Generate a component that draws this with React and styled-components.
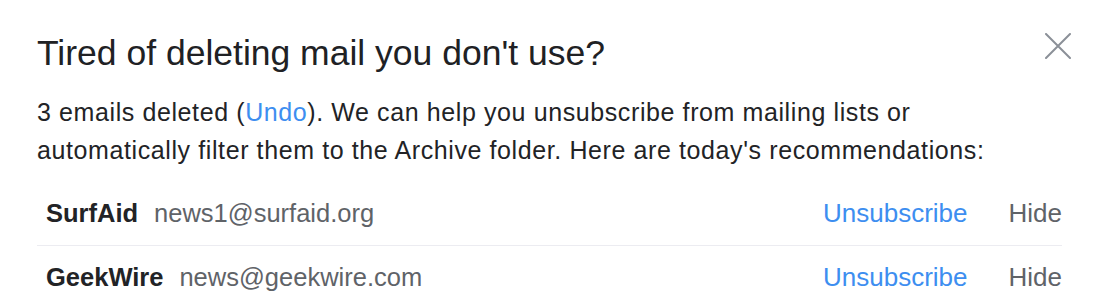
import React from "react";
import styled, { createGlobalStyle } from "styled-components";

const GlobalStyle = createGlobalStyle`
  html, body {
    margin: 0;
    padding: 0;
    background: #ffffff;
  }
  body {
    font-family: "Liberation Sans", Arial, Helvetica, sans-serif;
    color: #222326;
  }
`;

const senders = [
  { name: "SurfAid", email: "news1@surfaid.org" },
  { name: "GeekWire", email: "news@geekwire.com" },
];

function App() {
  return (
    <>
      <GlobalStyle />
      <Card>
        <Header>
          <Title>Tired of deleting mail you don't use?</Title>
          <CloseButton aria-label="Close">
            <svg width="26" height="26" viewBox="0 0 26 26">
              <path
                d="M1 1 L25 25 M25 1 L1 25"
                stroke="#8b9098"
                strokeWidth="2"
                strokeLinecap="round"
              />
            </svg>
          </CloseButton>
        </Header>
        <Message>
          3 emails deleted (<Link>Undo</Link>). We can help you unsubscribe from
          mailing lists or
          <br />
          automatically filter them to the Archive folder. Here are today's
          recommendations:
        </Message>
        <List>
          {senders.map((s) => (
            <Row key={s.email}>
              <Name>{s.name}</Name>
              <Email>{s.email}</Email>
              <Action $primary>Unsubscribe</Action>
              <Action>Hide</Action>
            </Row>
          ))}
        </List>
      </Card>
    </>
  );
}

const Card = styled.div`
  padding: 33px 29px 0 37px;
`;

const Header = styled.div`
  display: flex;
  align-items: flex-start;
  justify-content: space-between;
`;

const Title = styled.h1`
  margin: 0;
  font-size: 35.5px;
  line-height: 40px;
  font-weight: 400;
  color: #202124;
`;

const CloseButton = styled.button`
  border: 0;
  background: none;
  padding: 0;
  width: 26px;
  height: 26px;
  display: flex;
  cursor: pointer;
`;

const Message = styled.p`
  margin: 20px 0 0;
  font-size: 25px;
  line-height: 38px;
  letter-spacing: 0.6px;
  color: #222326;
`;

const Link = styled.a`
  color: #3d8ef0;
  cursor: pointer;
`;

const List = styled.div`
  margin: 13px 9px 0 0;
`;

const Row = styled.div`
  display: flex;
  align-items: center;
  height: 63px;
  padding-left: 9px;
  font-size: 26px;
  & + & {
    border-top: 1px solid #ececf1;
  }
`;

const Name = styled.span`
  font-size: 25.5px;
  font-weight: 700;
  color: #222326;
  margin-right: 16px;
`;

const Email = styled.span`
  font-size: 25.5px;
  color: #5f6368;
  flex: 1;
`;

const Action = styled.a`
  color: ${(p) => (p.$primary ? "#3d8ef0" : "#5f6368")};
  margin-left: ${(p) => (p.$primary ? "0" : "41px")};
  cursor: pointer;
`;

export default App;
